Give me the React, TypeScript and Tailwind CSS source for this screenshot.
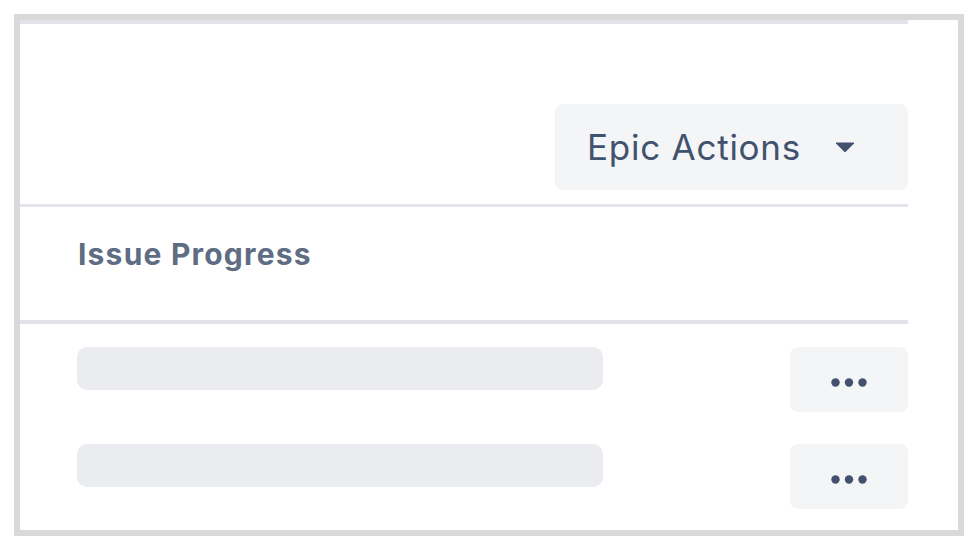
import React from "react";

function Dots() {
  return (
    <svg width="36" height="9" viewBox="0 0 36 9">
      <circle cx="4.5" cy="4.5" r="4.2" fill="#42526e" />
      <circle cx="18" cy="4.5" r="4.2" fill="#42526e" />
      <circle cx="31.5" cy="4.5" r="4.2" fill="#42526e" />
    </svg>
  );
}

function Row() {
  return (
    <div className="flex items-start justify-between pl-[57px]">
      <div className="w-[526px] h-[43px] rounded-[10px] bg-[#ebecf0]" />
      <button className="w-[118px] h-[65px] rounded-[8px] bg-[#f4f5f7] flex items-center justify-center pt-[5px]">
        <Dots />
      </button>
    </div>
  );
}

export default function App() {
  return (
    <div className="w-[976px] h-[550px] bg-white pl-[14px] pr-[12px] py-[14px]" style={{ fontFamily: "Inter, 'Liberation Sans', sans-serif" }}>
      <div className="h-full border-[6px] border-[#d9d9d9] flex flex-col pr-[50px]">
        <div className="h-[4px] bg-[#e2e2eb]" />
        <div className="h-[180px] flex items-end justify-end pb-[14px]">
          <button className="w-[353px] h-[86px] rounded-[8px] bg-[#f4f5f7] flex items-center pl-[32px] text-[#42526e]">
            <span className="text-[35px] leading-none tracking-[0.75px]">Epic Actions</span>
            <svg className="ml-[34px]" width="20" height="11" viewBox="0 0 20 11">
              <path d="M1 1.5 Q0.5 0.5 2 0.5 L18 0.5 Q19.5 0.5 19 1.5 L11 9.5 Q10 10.5 9 9.5 Z" fill="#42526e" />
            </svg>
          </button>
        </div>
        <div className="h-[3px] bg-[#e4e4ec]" />
        <div className="h-[113px] flex items-center pl-[58px] pb-[18px]">
          <span className="text-[30px] font-bold tracking-[1.2px] text-[#5e6c84]">Issue Progress</span>
        </div>
        <div className="h-[4px] bg-[#e2e2eb]" />
        <div className="flex flex-col gap-[32px] pt-[23px]">
          <Row />
          <Row />
        </div>
      </div>
    </div>
  );
}
